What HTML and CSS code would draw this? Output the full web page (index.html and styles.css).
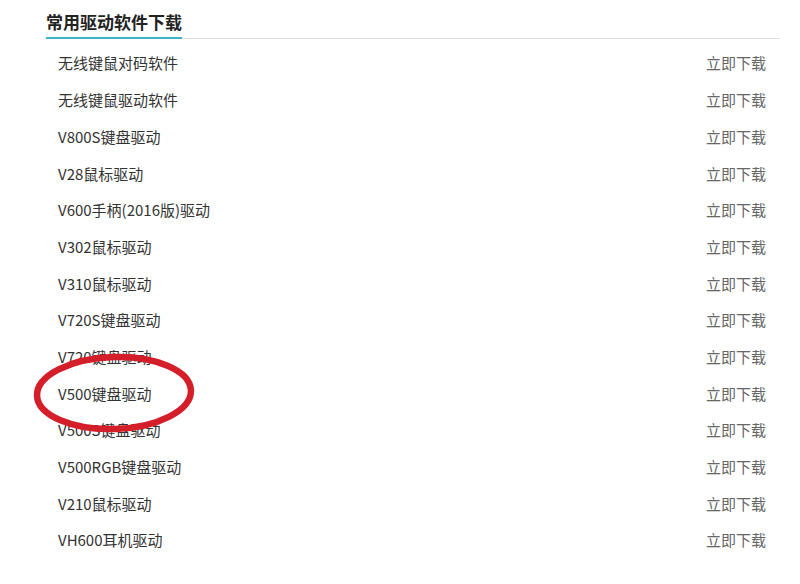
FILE: index.html
```html
<!DOCTYPE html>
<html lang="zh-CN">
<head>
    <meta charset="UTF-8">
    <meta name="viewport" content="width=device-width, initial-scale=1.0">
    <title>常用驱动软件下载</title>
    <link rel="stylesheet" href="styles.css">
</head>
<body>
    <div class="container">
        <div class="header">
            <h2 class="title">常用驱动软件下载</h2>
        </div>
        <ul class="driver-list">
            <li><span class="name">无线键鼠对码软件</span><a href="#" class="download">立即下载</a></li>
            <li><span class="name">无线键鼠驱动软件</span><a href="#" class="download">立即下载</a></li>
            <li><span class="name">V800S键盘驱动</span><a href="#" class="download">立即下载</a></li>
            <li><span class="name">V28鼠标驱动</span><a href="#" class="download">立即下载</a></li>
            <li><span class="name">V600手柄(2016版)驱动</span><a href="#" class="download">立即下载</a></li>
            <li><span class="name">V302鼠标驱动</span><a href="#" class="download">立即下载</a></li>
            <li><span class="name">V310鼠标驱动</span><a href="#" class="download">立即下载</a></li>
            <li><span class="name">V720S键盘驱动</span><a href="#" class="download">立即下载</a></li>
            <li><span class="name">V720键盘驱动</span><a href="#" class="download">立即下载</a></li>
            <li><span class="name">V500键盘驱动</span><a href="#" class="download">立即下载</a></li>
            <li><span class="name">V500S键盘驱动</span><a href="#" class="download">立即下载</a></li>
            <li><span class="name">V500RGB键盘驱动</span><a href="#" class="download">立即下载</a></li>
            <li><span class="name">V210鼠标驱动</span><a href="#" class="download">立即下载</a></li>
            <li><span class="name">VH600耳机驱动</span><a href="#" class="download">立即下载</a></li>
        </ul>
    </div>
    <svg class="mark" width="180" height="90" viewBox="0 0 180 90">
        <ellipse cx="90" cy="45" rx="77" ry="36" fill="none" stroke="#d41e2a" stroke-width="6.5" transform="rotate(-2 90 45)"/>
    </svg>
</body>
</html>
```

FILE: styles.css
```css
* {
    margin: 0;
    padding: 0;
    box-sizing: border-box;
}
body {
    background: #fff;
    font-family: "Microsoft YaHei", "Noto Sans CJK SC", "Liberation Sans", sans-serif;
}
.container {
    width: 780px;
    padding-left: 46px;
}
.header {
    border-bottom: 1px solid #dedede;
    height: 39px;
}
.title {
    display: inline-block;
    font-size: 17px;
    font-weight: bold;
    color: #222;
    line-height: 24px;
    padding-top: 10px;
    padding-bottom: 3px;
    border-bottom: 2px solid #3cb5c2;
}
.driver-list {
    list-style: none;
    margin-top: 5.6px;
    padding-left: 12px;
    padding-right: 14px;
}
.driver-list li {
    display: flex;
    justify-content: space-between;
    align-items: center;
    height: 36.7px;
    font-size: 15px;
}
.name {
    color: #333;
}
.download {
    color: #666;
    text-decoration: none;
}
.mark {
    position: absolute;
    left: 24px;
    top: 348px;
}
```
